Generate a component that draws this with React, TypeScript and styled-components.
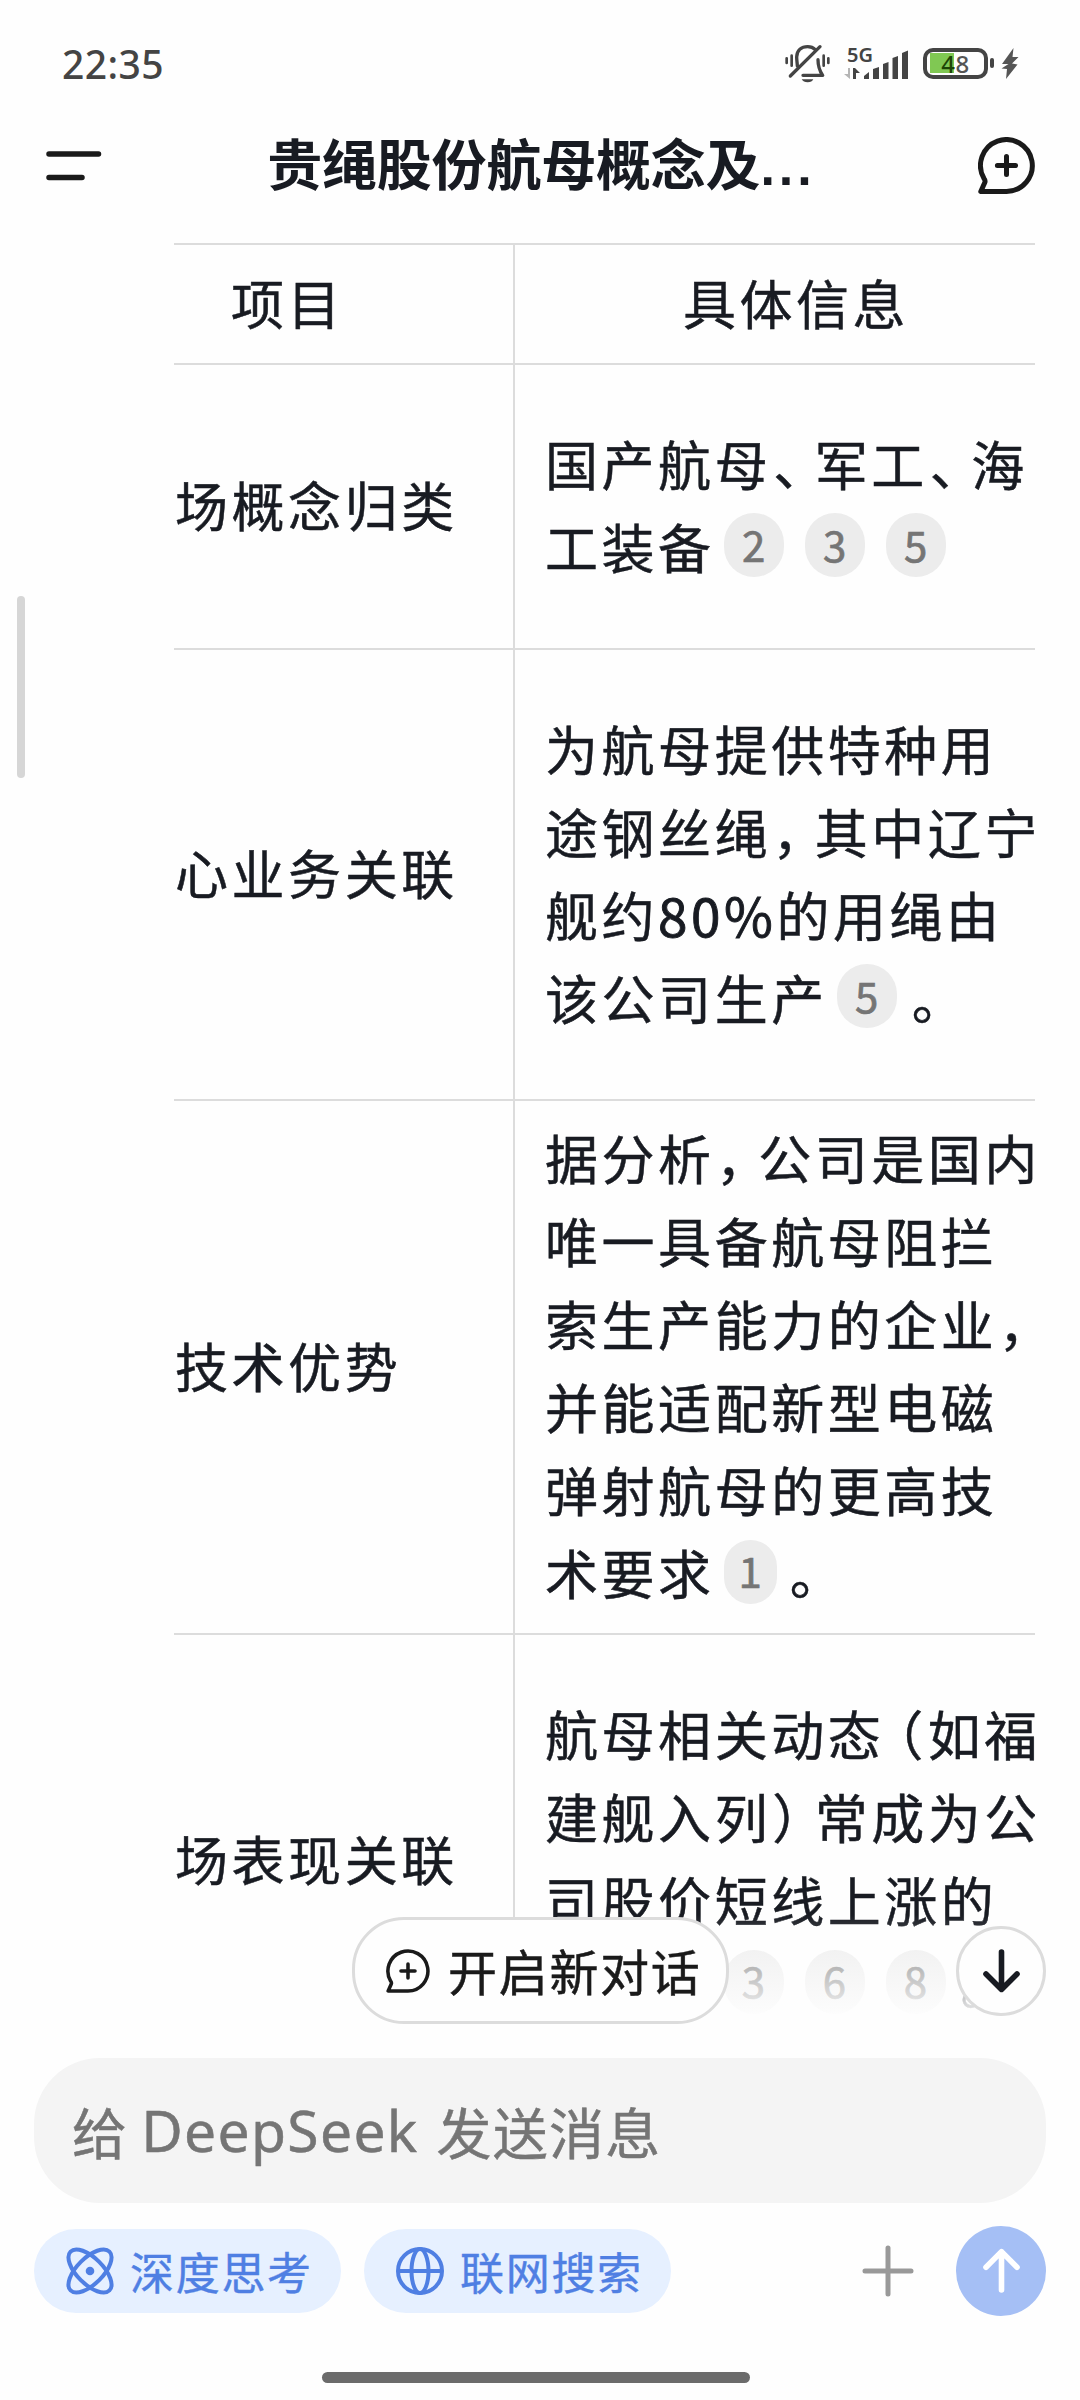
import React from "react";
import styled, { createGlobalStyle } from "styled-components";

const GlobalStyle = createGlobalStyle`
  * { box-sizing: border-box; }
  body {
    margin: 0;
    background: #fefefe;
    font-family: "Noto Sans CJK SC", "Noto Sans", sans-serif;
  }
`;

const Screen = styled.div`
  position: relative;
  display: flex;
  flex-direction: column;
  width: 1080px;
  height: 2400px;
  overflow: hidden;
  background: #fefefe;
  color: #181b22;
`;

const StatusBar = styled.div`
  display: flex;
  align-items: center;
  justify-content: space-between;
  height: 84px;
  padding: 42px 61px 0 62px;
  flex: none;
  color: #444;
`;

const Clock = styled.span`
  padding-top: 2px;
  font-family: "Noto Sans", sans-serif;
  font-size: 39px;
  font-weight: 500;
  line-height: 44px;
  letter-spacing: 0.4px;
`;

const StatusIcons = styled.div`
  display: flex;
  align-items: center;
  height: 44px;
`;

const Network = styled.div`
  display: flex;
  flex-direction: column;
  width: 66px;
  margin: 0 13px 0 14px;
`;

const Battery = styled.div`
  position: relative;
  display: flex;
  align-items: center;
  justify-content: center;
  width: 65px;
  height: 31px;
  border: 4px solid #444;
  border-radius: 10px;
  background: linear-gradient(90deg, #80c853 0 24.5px, transparent 24.5px) 3px 1.5px / 51px 20px no-repeat;
  font-family: "Noto Sans", sans-serif;
  font-size: 24px;
  font-weight: 500;
  line-height: 23px;
`;

const Digit = styled.span<{ $tone: string }>`
  color: ${(p) => p.$tone};
  letter-spacing: 0.6px;
`;

const Cap = styled.span`
  width: 4px;
  height: 10px;
  margin: 0 7px 0 2px;
  border-radius: 2px;
  background: #444;
`;

const Header = styled.header`
  display: flex;
  align-items: center;
  justify-content: space-between;
  flex: none;
  height: 159px;
  padding: 4px 45px 0 46px;
`;

const Title = styled.h1`
  margin: 0 0 3px 2px;
  font-size: 55px;
  font-weight: 700;
  line-height: 80px;
  letter-spacing: -0.2px;
  white-space: nowrap;
`;

const Dots = styled.span`
  font-family: "Liberation Sans", sans-serif;
  font-size: 52px;
  letter-spacing: 4px;
`;

const HeaderIcon = styled.svg`
  display: block;
  flex: none;
`;

const Chat = styled.main`
  position: relative;
  flex: none;
  height: 1815px;
  padding: 0 45px 0 174px;
  overflow: hidden;
`;

const Table = styled.div`
  display: flex;
  flex-direction: column;
  overflow: hidden;
`;

const Row = styled.div<{ $h: number }>`
  display: grid;
  grid-template-columns: 341px 1fr;
  flex: none;
  height: ${(p) => p.$h}px;
  border-top: 2px solid #dcdcdc;
`;

const Cell = styled.div<{ $center?: boolean; $left?: number; $right?: number }>`
  display: flex;
  flex-direction: column;
  justify-content: center;
  align-items: ${(p) => (p.$center ? "center" : "flex-start")};
  padding: 0 ${(p) => p.$right ?? 0}px 4px ${(p) => p.$left ?? 0}px;
  font-size: 53px;
  letter-spacing: 3.55px;
  line-height: 83px;
  min-width: 0;
  -webkit-text-stroke: 0.5px currentColor;
  &:first-child { border-right: 2px solid #dcdcdc; }
`;

const Line = styled.div`
  display: flex;
  align-items: center;
  height: 83px;
  white-space: nowrap;
`;

const Punct = styled.span<{ $shift: number }>`
  display: inline-block;
  width: 43.5px;
  text-indent: ${(p) => p.$shift}px;
`;

const Strong = styled.span`
  -webkit-text-stroke: 0.9px currentColor;
`;

const Cite = styled.span<{ $narrow?: boolean }>`
  display: flex;
  align-items: center;
  justify-content: center;
  width: ${(p) => (p.$narrow ? 53 : 60)}px;
  height: 64px;
  margin: 0 ${(p) => (p.$narrow ? 10 : 12)}px 2px 9px;
  padding-bottom: 3px;
  border-radius: 30px;
  background: #ececec;
  color: #757575;
  font-size: 42px;
  letter-spacing: 0;
  line-height: 60px;
  -webkit-text-stroke: 0.7px currentColor;
`;

const Stop = styled.span`
  margin-left: 3px;
`;

const Spacer = styled.span<{ $w: number }>`
  width: ${(p) => p.$w}px;
`;

const Fade = styled.div`
  position: absolute;
  left: 0;
  right: 0;
  top: 1672px;
  bottom: 0;
  background: linear-gradient(rgba(254, 254, 254, 0), #fefefe 108px);
`;

const ScrollThumb = styled.div`
  position: absolute;
  left: 17px;
  top: 353px;
  width: 8px;
  height: 182px;
  border-radius: 4px;
  background: #d6d6d6;
`;

const NewChat = styled.button`
  position: absolute;
  left: 352px;
  top: 1674px;
  display: flex;
  align-items: center;
  gap: 18px;
  width: 377px;
  height: 107px;
  padding: 0 0 0 31px;
  border: 3px solid #dcdcdc;
  border-radius: 52px;
  background: #fefefe;
  color: #1a1a1a;
  font-family: inherit;
  font-size: 49px;
  letter-spacing: 1.7px;
  line-height: 70px;
  white-space: nowrap;
  -webkit-text-stroke: 0.5px currentColor;
`;

const PillLabel = styled.span`
  padding-bottom: 1px;
`;

const ScrollDown = styled.button`
  position: absolute;
  left: 956px;
  top: 1683px;
  display: flex;
  align-items: center;
  justify-content: center;
  width: 90px;
  height: 90px;
  padding: 0;
  border: 3px solid #dcdcdc;
  border-radius: 50%;
  background: #fefefe;
`;

const Composer = styled.footer`
  display: flex;
  flex-direction: column;
  flex: none;
  padding: 0 34px;
`;

const Input = styled.div`
  display: flex;
  align-items: center;
  height: 145px;
  padding: 0 0 1px 38px;
  border-radius: 66px;
  background: #f4f4f4;
  color: #757575;
  font-size: 55px;
  letter-spacing: 1.2px;
  white-space: pre;
  -webkit-text-stroke: 0.5px currentColor;
`;

const Latin = styled.span`
  margin: 0 18px 0 13px;
  font-family: "Noto Sans", sans-serif;
  font-size: 57px;
  letter-spacing: 1.3px;
`;

const Actions = styled.div`
  display: flex;
  align-items: center;
  height: 90px;
  margin-top: 23px;
`;

const Chip = styled.button`
  display: flex;
  align-items: center;
  gap: 16px;
  width: 307px;
  height: 84px;
  margin-right: 23px;
  padding: 0 0 0 32px;
  border: 0;
  border-radius: 42px;
  background: #e6f0ff;
  color: #4f7fe3;
  font-family: inherit;
  font-size: 44px;
  letter-spacing: 1.7px;
  white-space: nowrap;
  -webkit-text-stroke: 0.4px currentColor;
`;

const ChipLabel = styled.span`
  padding-bottom: 1px;
  line-height: 64px;
`;

const Plus = styled.svg`
  display: block;
  margin: 0 42px 0 auto;
`;

const Send = styled.button`
  display: flex;
  align-items: center;
  justify-content: center;
  width: 90px;
  height: 90px;
  padding: 0;
  border: 0;
  border-radius: 50%;
  background: #a5bff5;
`;

const HomeBar = styled.div`
  width: 428px;
  height: 11px;
  margin: 56px 0 0 288px;
  border-radius: 6px;
  background: #6b6b6b;
`;

const ChatPlusIcon = ({ size, stroke }: { size: number; stroke: number }) => (
  <HeaderIcon width={size} height={size} viewBox="0 0 57 57" fill="none" stroke="#1a1a1a" strokeWidth={stroke} strokeLinecap="round" strokeLinejoin="round">
    <path d="M28.5 54.4A25.9 25.9 0 1 0 6 41.5Q7.6 43.6 6.8 45.4L2.8 54.4Z" />
    <path d="M28.5 19.4V37.6M19.4 28.5H37.6" />
  </HeaderIcon>
);

const ArrowIcon = ({ up, color }: { up?: boolean; color: string }) => (
  <svg width="38" height="46" viewBox="0 0 38 46" fill="none" stroke={color} strokeWidth="5.6" strokeLinecap="round" strokeLinejoin="round">
    <path d={up ? "M19.5 42V4M4 19.2L19.5 3.6L35 19.2" : "M19.5 4V41M4 26L19.5 41.4L35 26"} />
  </svg>
);

const BellOffIcon = () => (
  <svg width="46" height="40" viewBox="0 0 138 120" fill="none" stroke="#444" strokeWidth="10" strokeLinecap="round" strokeLinejoin="round">
    <path d="M40 69C40 62 38 52 38 42C39 22 52 11 71 11C80 11 88 14 94 20" />
    <path d="M102 50C102 68 106 82 116 97H57" />
    <path d="M108 11L19 99" />
    <path d="M53 109H88Q84 118 71 118Q58 118 53 109Z" fill="#444" stroke="none" />
    <path d="M8 46V60M23 38V68M119 38V68M133 46V60" strokeWidth="8" />
  </svg>
);

const SignalIcon = () => (
  <svg width="66" height="44" viewBox="0 0 66 44">
    <text x="3" y="21" fontFamily="Noto Sans" fontWeight="600" fontSize="20" fill="#444">5G</text>
    <path d="M6 27V38L0 33L4 33V27Z" fill="#b5b5b5" />
    <path d="M9 27H11L16 32H12V38H9Z" fill="#444" />
    <path d="M20 38V35L25 31V38ZM29 38V28L35 26V38ZM39 38V23L44.500 21V38ZM48.500 38V17L54 15V38ZM58 38V12L64 9.500V38Z" fill="#444" />
  </svg>
);

const BoltIcon = () => (
  <svg width="18" height="31" viewBox="0 0 18 31" fill="#555">
    <path d="M12.500 0L1 16H7.500L0.500 20.500L6 21L5 31L16.500 16.500L11 15.500L17.500 9H11.500Z" />
  </svg>
);

const AtomIcon = () => (
  <svg width="48" height="48" viewBox="0 0 48 48" fill="none" stroke="currentColor" strokeWidth="4">
    <ellipse cx="24" cy="24" rx="27.500" ry="13" transform="rotate(45 24 24)" />
    <ellipse cx="24" cy="24" rx="27.500" ry="13" transform="rotate(-45 24 24)" />
    <circle cx="24" cy="24" r="4.300" fill="currentColor" stroke="none" />
  </svg>
);

const GlobeIcon = () => (
  <svg width="48" height="48" viewBox="0 0 48 48" fill="none" stroke="currentColor" strokeWidth="4">
    <circle cx="24" cy="24" r="22" />
    <ellipse cx="24" cy="24" rx="8.500" ry="22" />
    <path d="M2 24H46" />
  </svg>
);

const Comma = () => <Punct $shift={1}>，</Punct>;
const Pause = () => <Punct $shift={2}>、</Punct>;

export default function App() {
  return (
    <Screen>
      <GlobalStyle />
      <StatusBar>
        <Clock>22:35</Clock>
        <StatusIcons>
          <BellOffIcon />
          <Network><SignalIcon /></Network>
          <Battery><Digit $tone="#1d4506">4</Digit><Digit $tone="#555">8</Digit></Battery>
          <Cap />
          <BoltIcon />
        </StatusIcons>
      </StatusBar>

      <Header>
        <HeaderIcon width="57" height="30" viewBox="0 0 57 30" stroke="#1a1a1a" strokeWidth="5.5" strokeLinecap="round">
          <path d="M3 3H52.500M3 26.500H36" />
        </HeaderIcon>
        <Title>贵绳股份航母概念及<Dots>...</Dots></Title>
        <ChatPlusIcon size={57} stroke={5} />
      </Header>

      <Chat>
        <Table>
          <Row $h={120}>
            <Cell $center $right={112}><Line>项目</Line></Cell>
            <Cell $center $left={42}><Line>具体信息</Line></Cell>
          </Row>
          <Row $h={285}>
            <Cell $left={1}><Line>场概念归类</Line></Cell>
            <Cell $left={30}>
              <Line>国产航母<Pause />军工<Pause />海</Line>
              <Line>工装备<Cite>2</Cite><Cite>3</Cite><Cite>5</Cite></Line>
            </Cell>
          </Row>
          <Row $h={451}>
            <Cell $left={1}><Line>心业务关联</Line></Cell>
            <Cell $left={30}>
              <Line>为航母提供特种用</Line>
              <Line>途钢丝绳<Comma />其中辽宁</Line>
              <Line>舰约<Strong>80%</Strong>的用绳由</Line>
              <Line>该公司生产<Cite>5</Cite><Stop>。</Stop></Line>
            </Cell>
          </Row>
          <Row $h={534}>
            <Cell $left={1}><Line>技术优势</Line></Cell>
            <Cell $left={30}>
              <Line>据分析<Comma />公司是国内</Line>
              <Line>唯一具备航母阻拦</Line>
              <Line>索生产能力的企业<Comma /></Line>
              <Line>并能适配新型电磁</Line>
              <Line>弹射航母的更高技</Line>
              <Line>术要求<Cite $narrow>1</Cite><Stop>。</Stop></Line>
            </Cell>
          </Row>
          <Row $h={452}>
            <Cell $left={1}><Line>场表现关联</Line></Cell>
            <Cell $left={30}>
              <Line>航母相关动态<Punct $shift={-14}>（</Punct>如福</Line>
              <Line>建舰入列<Punct $shift={1}>）</Punct>常成为公</Line>
              <Line>司股价短线上涨的</Line>
              <Line><Spacer $w={169.5} /><Cite>3</Cite><Cite>6</Cite><Cite>8</Cite><Stop>。</Stop></Line>
            </Cell>
          </Row>
        </Table>
        <ScrollThumb />
        <Fade />
        <NewChat><ChatPlusIcon size={44} stroke={4.6} /><PillLabel>开启新对话</PillLabel></NewChat>
        <ScrollDown><ArrowIcon color="#181b22" /></ScrollDown>
      </Chat>

      <Composer>
        <Input>给<Latin>DeepSeek</Latin>发送消息</Input>
        <Actions>
          <Chip><AtomIcon /><ChipLabel>深度思考</ChipLabel></Chip>
          <Chip><GlobeIcon /><ChipLabel>联网搜索</ChipLabel></Chip>
          <Plus width="52" height="52" viewBox="0 0 52 52" stroke="#999" strokeWidth="5" strokeLinecap="round">
            <path d="M26 3V49M3 26H49" />
          </Plus>
          <Send><ArrowIcon up color="#fff" /></Send>
        </Actions>
        <HomeBar />
      </Composer>
    </Screen>
  );
}
